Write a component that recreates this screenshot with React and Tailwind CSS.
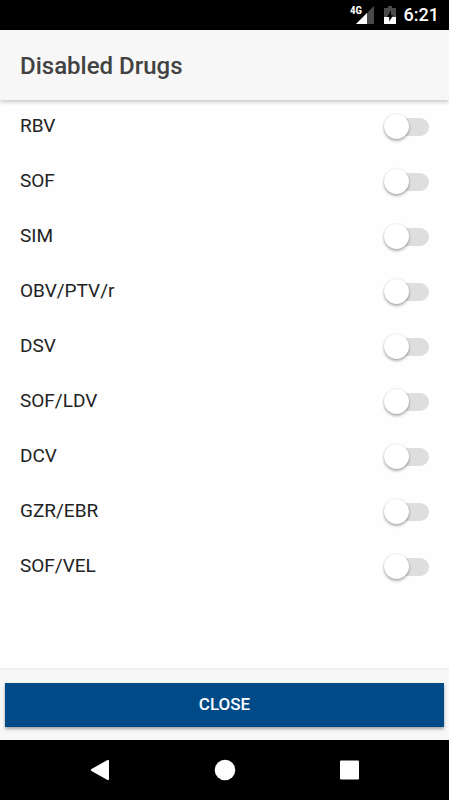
const drugs = [
  'RBV',
  'SOF',
  'SIM',
  'OBV/PTV/r',
  'DSV',
  'SOF/LDV',
  'DCV',
  'GZR/EBR',
  'SOF/VEL',
];

function StatusBar() {
  return (
    <div className="flex h-[30px] shrink-0 items-center justify-end bg-black pr-2.5 text-white">
      <svg className="h-[20px] w-[24px]" viewBox="0 0 24 20" role="img" aria-label="4G signal">
        <path d="M24 1V19H6Z" fill="#4a4a4a" />
        <path d="M17 8V19H6Z" fill="#fff" />
        <path d="M0 0H13V10H0Z" fill="#000" />
        <text x="0" y="9" fill="#fff" fontSize="11" fontWeight="700" fontFamily="'Roboto Condensed', 'Open Sans Condensed', Roboto, sans-serif">4G</text>
      </svg>
      <svg className="ml-2.5 h-[20px] w-[12px]" viewBox="0 0 12 20" role="img" aria-label="Battery charging">
        <path d="M4 1H8V3H12V12H0V3H4Z" fill="#4a4a4a" />
        <path d="M0 12H12V19H0Z" fill="#fff" />
        <path d="M7 5.500V10.300H9.200L5.200 16.500V12H3Z" fill="#000" />
      </svg>
      <span className="ml-2 text-lg font-medium">6:21</span>
    </div>
  );
}

function DrugRow({ name }) {
  return (
    <li>
      <label className="flex h-[55px] items-center justify-between px-5 text-[19px] text-[#222]">
        {name}
        <input
          type="checkbox"
          role="switch"
          className="relative h-[18px] w-[45px] appearance-none rounded-full bg-[#dedede] before:absolute before:-top-1 before:left-0 before:size-[25px] before:rounded-full before:bg-white before:shadow-[0_2px_3px_rgba(0,0,0,0.3),0_0_2px_rgba(0,0,0,0.15)] checked:before:left-5"
        />
      </label>
    </li>
  );
}

function NavBar() {
  return (
    <nav className="flex h-[60px] shrink-0 items-center justify-center gap-[101px] bg-black">
      <button type="button" aria-label="Back">
        <svg className="size-6" viewBox="0 0 24 24" fill="#fff">
          <path d="M19.500 2Q21 1.500 21 3V21Q21 22.500 19.500 22L3.500 13Q2 12 3.500 11Z" />
        </svg>
      </button>
      <button type="button" aria-label="Home">
        <svg className="size-6" viewBox="0 0 24 24" fill="#fff">
          <circle cx="12" cy="12" r="10.300" />
        </svg>
      </button>
      <button type="button" aria-label="Recent apps">
        <svg className="size-6" viewBox="0 0 24 24" fill="#fff">
          <rect x="2" y="2.500" width="19" height="19" rx="1" />
        </svg>
      </button>
    </nav>
  );
}

export default function App() {
  return (
    <div className="flex min-h-screen flex-col bg-[#fefefe] font-[Roboto,sans-serif]">
      <StatusBar />
      <header className="flex h-[70px] shrink-0 items-center bg-[#f7f7f7] px-5 pt-0.5 shadow-[0_2px_4px_rgba(0,0,0,0.22)]">
        <h1 className="text-2xl font-medium text-[#424242]">Disabled Drugs</h1>
      </header>
      <main className="flex-1">
        <ul className="-mt-px">
          {drugs.map((name) => (
            <DrugRow key={name} name={name} />
          ))}
        </ul>
      </main>
      <footer className="shrink-0 border-t-2 border-[#f0f0f0] bg-[#f7f7f7] px-[5px] py-[13px]">
        <button
          type="button"
          className="block h-[44px] w-full bg-[#004b87] text-[17px] font-medium text-white shadow-[0_2px_3px_rgba(0,0,0,0.35)]"
        >
          CLOSE
        </button>
      </footer>
      <NavBar />
    </div>
  );
}
